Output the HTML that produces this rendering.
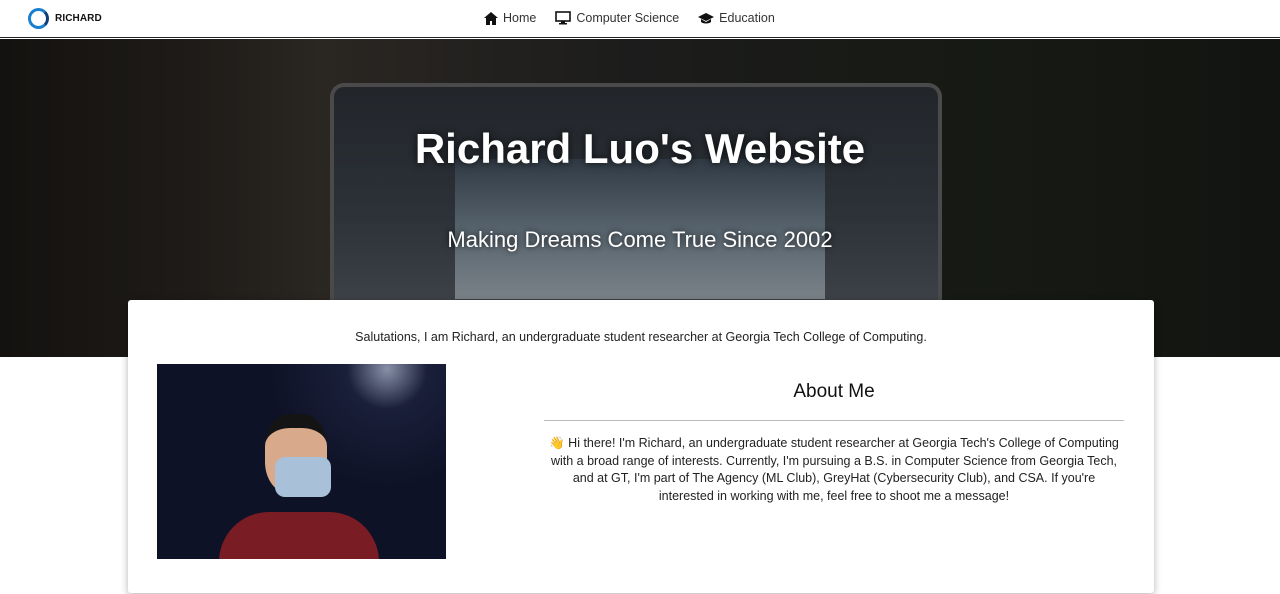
<!DOCTYPE html>
<html><head><style>
*{margin:0;padding:0;box-sizing:border-box}
body{width:1280px;height:594px;overflow:hidden;background:#fff;font-family:"Liberation Sans",sans-serif;color:#222;position:relative}
nav{position:absolute;top:0;left:0;width:1280px;height:38px;background:#fff;border-bottom:1px solid #222}
.logo{position:absolute;left:28px;top:8px;width:21px;height:21px;border-radius:50%;border:3px solid #1a7fd0;border-right-color:#0c3f7a}
.logotxt{position:absolute;left:55px;top:13px;font-size:10px;font-weight:bold;color:#111;letter-spacing:.1px}
.links{position:absolute;top:11px;left:484px;font-size:12.5px;color:#333;display:flex;gap:19px}
.links span{display:flex;align-items:center;gap:5px}
.hero{position:absolute;top:39px;left:0;width:1280px;height:318px;background:
linear-gradient(90deg,#141210 0%,#1e1b18 15%,#2a2622 25%,#1c1c1c 50%,#171a14 75%,#121411 100%)}
.laptop{position:absolute;left:330px;top:44px;width:612px;height:220px;border:4px solid #4a4a4a;border-bottom:none;border-radius:14px 14px 0 0;background:linear-gradient(#22252a,#2c3238 60%,#3e4248)}
.screen{position:absolute;left:455px;top:120px;width:370px;height:140px;background:linear-gradient(#303a44,#5a6670 55%,#7a8288)}
.h1{position:absolute;top:86px;left:0;width:1280px;text-align:center;color:#fff;font-size:42px;font-weight:bold;text-shadow:0 0 8px rgba(0,0,0,.8)}
.h2{position:absolute;top:188px;left:0;width:1280px;text-align:center;color:#fff;font-size:22px;text-shadow:0 0 6px rgba(0,0,0,.8)}
.card{position:absolute;left:128px;top:300px;width:1026px;height:293px;background:#fff;border-radius:3px;box-shadow:0 2px 8px rgba(0,0,0,.3)}
.intro{position:absolute;top:30px;left:0;width:1026px;text-align:center;font-size:12.5px;color:#222}
.photo{position:absolute;left:29px;top:64px;width:289px;height:195px;background:radial-gradient(circle at 230px 5px,#8890a8 0,#1a1f3a 40px,#0e1226 120px);overflow:hidden}
.head{position:absolute;left:108px;top:50px;width:62px;height:80px;border-radius:40%;background:#d9a98c;border-top:14px solid #141414}
.mask{position:absolute;left:118px;top:93px;width:56px;height:40px;border-radius:10px;background:#a8c0d8}
.body{position:absolute;left:62px;top:148px;width:160px;height:60px;border-radius:50px 50px 0 0;background:#7a1c24}
.about{position:absolute;left:416px;top:81px;width:580px;text-align:center;font-size:19px;color:#111}
.hr{position:absolute;left:416px;top:120px;width:580px;border-top:1px solid #bbb}
.p{position:absolute;left:416px;top:135px;width:580px;text-align:center;font-size:12.5px;line-height:17.5px;color:#222}
</style></head><body>
<nav><div class="logo"></div><div class="logotxt">RICHARD</div>
<div class="links">
<span><svg width="14" height="13" viewBox="0 0 14 13"><path d="M7 0L0 6h2v7h4V9h2v4h4V6h2z" fill="#111"/></svg>Home</span>
<span><svg width="16" height="14" viewBox="0 0 16 14"><rect x="1" y="1" width="14" height="9" fill="none" stroke="#111" stroke-width="1.6"/><path d="M6 10h4v2h2v1.5H4V12h2z" fill="#111"/></svg>Computer Science</span>
<span><svg width="16" height="13" viewBox="0 0 16 13"><path d="M8 1L0 5l8 4 8-4zM3 7v3c2 2 8 2 10 0V7L8 10z" fill="#111"/></svg>Education</span>
</div></nav>
<div class="hero"><div class="laptop"></div><div class="screen"></div>
<div class="h1">Richard Luo's Website</div><div class="h2">Making Dreams Come True Since 2002</div></div>
<div class="card">
<div class="intro">Salutations, I am Richard, an undergraduate student researcher at Georgia Tech College of Computing.</div>
<div class="photo"><div class="body"></div><div class="head"></div><div class="mask"></div></div>
<div class="about">About Me</div><div class="hr"></div>
<div class="p">👋 Hi there! I'm Richard, an undergraduate student researcher at Georgia Tech's College of Computing with a broad range of interests. Currently, I'm pursuing a B.S. in Computer Science from Georgia Tech, and at GT, I'm part of The Agency (ML Club), GreyHat (Cybersecurity Club), and CSA. If you're interested in working with me, feel free to shoot me a message!</div>
</div>
</body></html>
